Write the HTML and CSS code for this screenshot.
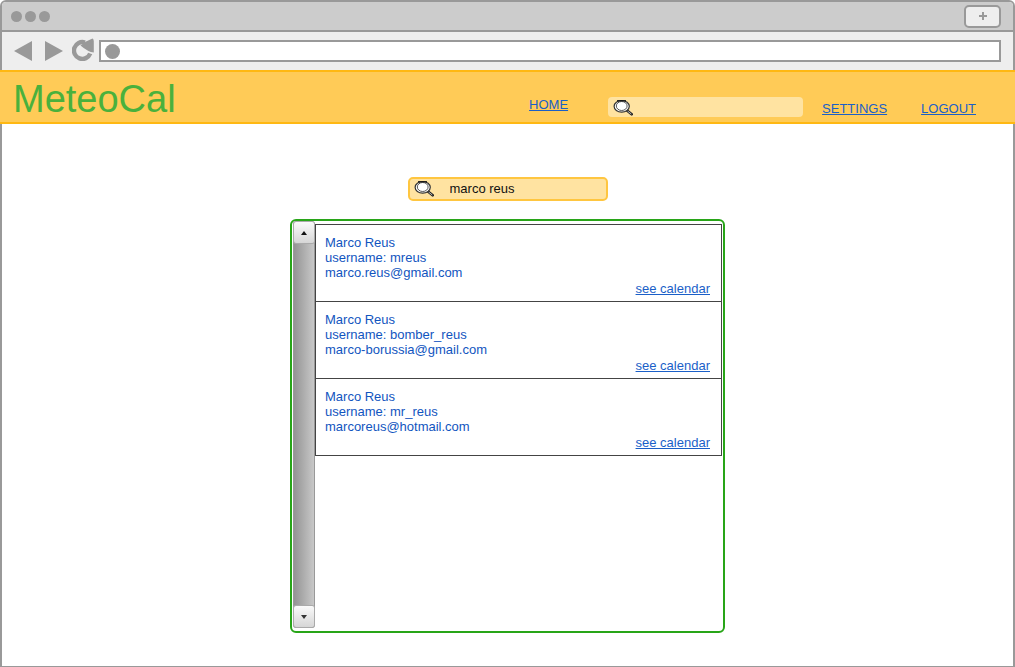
FILE: index.html
```
<!DOCTYPE html>
<html lang="en">
<head>
<meta charset="utf-8">
<title>MeteoCal</title>
<link rel="stylesheet" href="styles.css">
</head>
<body>
<svg class="defs" aria-hidden="true">
  <symbol id="lens" viewBox="0 0 20 17">
    <path d="M14 11.500 L18.700 15.300" stroke="#222" stroke-width="2.600" stroke-linecap="round"/>
    <path d="M14.500 12 L18.300 15" stroke="#ccc" stroke-width="0.900"/>
    <ellipse cx="8.700" cy="7.300" rx="7.600" ry="5.800" fill="#fff" stroke="#333" stroke-width="1.200"/>
    <ellipse cx="8.700" cy="7" rx="5.400" ry="4.500" fill="#fff" stroke="#444" stroke-width="0.900"/>
    <path d="M4 1.800 H13" stroke="#111" stroke-width="1.300"/>
  </symbol>
</svg>
<div class="window">
  <div class="titlebar">
    <div class="dots"><span class="dot"></span><span class="dot"></span><span class="dot"></span></div>
    <button class="new-tab" type="button" aria-label="New tab">
      <svg width="8" height="8" viewBox="0 0 8 8"><path d="M4 0V8M0 4H8" stroke="#999" stroke-width="2"/></svg>
    </button>
  </div>
  <div class="toolbar">
    <button class="tool" type="button" aria-label="Back"><svg width="18" height="20" viewBox="0 0 18 20"><path d="M0 10 L18 0 V20Z" fill="#999"/></svg></button>
    <button class="tool" type="button" aria-label="Forward"><svg width="18" height="20" viewBox="0 0 18 20"><path d="M18 10 L0 0 V20Z" fill="#999"/></svg></button>
    <button class="tool reload" type="button" aria-label="Reload"><svg width="23" height="24" viewBox="0 0 23 24"><path d="M13 4.500 A8.400 8.400 0 1 0 18.200 15.500" fill="none" stroke="#999" stroke-width="4.400"/><path d="M8.500 7.500 L14 3.500 L20.500 0.500 Q22 1 21.800 5 V14.500 Q16 14 8.500 7.500Z" fill="#999"/></svg></button>
    <label class="address"><span class="site"></span><input type="text" aria-label="Address"></label>
  </div>
  <header class="header">
    <h1 class="logo">MeteoCal</h1>
    <nav class="nav">
      <a class="home" href="#">HOME</a>
      <label class="search"><svg class="lens" width="20" height="17"><use href="#lens"/></svg><input type="search" aria-label="Search"></label>
      <a class="settings" href="#">SETTINGS</a>
      <a class="logout" href="#">LOGOUT</a>
    </nav>
  </header>
  <main class="main">
    <label class="search outlined"><svg class="lens" width="20" height="17"><use href="#lens"/></svg><input type="search" aria-label="Search users" value="marco reus"></label>
    <section class="panel">
      <div class="scrollbar">
        <button class="step" type="button" aria-label="Scroll up"><svg width="6" height="4" viewBox="0 0 6 4"><path d="M3 0L6 4H0Z" fill="#111"/></svg></button>
        <button class="step" type="button" aria-label="Scroll down"><svg width="6" height="4" viewBox="0 0 6 4"><path d="M3 4L6 0H0Z" fill="#333"/></svg></button>
      </div>
      <ul class="results">
        <li class="result"><p>Marco Reus<br>username: mreus<br>marco.reus@gmail.com</p><a href="#">see calendar</a></li>
        <li class="result"><p>Marco Reus<br>username: bomber_reus<br>marco-borussia@gmail.com</p><a href="#">see calendar</a></li>
        <li class="result"><p>Marco Reus<br>username: mr_reus<br>marcoreus@hotmail.com</p><a href="#">see calendar</a></li>
      </ul>
    </section>
  </main>
</div>
</body>
</html>
```
FILE: styles.css
```
* { box-sizing: border-box; }
body {
  margin: 0;
  background: #fff;
  font: 13px/15px "Liberation Sans", Arial, sans-serif;
  color: #1155c0;
}
a { color: #1a5fc8; text-underline-offset: 1px; }
button { padding: 0; border: 0; background: none; }
input { border: 0; padding: 0; background: none; font: inherit; color: #111; outline: none; min-width: 0; flex: 1; appearance: none; }
.defs { position: absolute; width: 0; height: 0; }
.window {
  display: flex;
  flex-direction: column;
  min-height: 100vh;
  border: 2px solid #999;
  border-bottom-width: 1px;
  border-radius: 6px 6px 0 0;
}
.titlebar {
  display: flex;
  align-items: center;
  justify-content: space-between;
  height: 30px;
  padding: 0 12px 0 9px;
  border-bottom: 2px solid #999;
  border-radius: 4px 4px 0 0;
  background: #ccc;
}
.dots { display: flex; gap: 3px; }
.dot { width: 11px; height: 11px; border-radius: 50%; background: #999; }
.new-tab {
  display: flex;
  align-items: center;
  justify-content: center;
  width: 37px;
  height: 23px;
  border: 2px solid #999;
  border-radius: 5px;
  background: #eee;
}
.toolbar {
  display: flex;
  align-items: center;
  height: 38px;
  padding: 0 12px;
  background: #eee;
}
.tool { display: flex; margin-right: 13px; }
.tool.reload { margin: 0 4px 2px -4px; }
.address {
  display: flex;
  flex: 1;
  align-items: center;
  gap: 6px;
  height: 22px;
  padding-left: 4px;
  border: 2px solid #999;
  background: #fff;
}
.site { width: 15px; height: 15px; border-radius: 50%; background: #999; }
.header {
  display: flex;
  justify-content: space-between;
  height: 54px;
  margin: 0 -2px;
  padding: 0 39px 0 13px;
  border: 2px solid #ffb812;
  border-width: 2px 0;
  background: #ffcb57;
}
.logo { margin: 4px 0 0; font-size: 38px; line-height: 46px; font-weight: 400; color: #4ab13c; }
.nav { display: flex; align-items: flex-start; padding-top: 25px; }
.home { margin-right: 40px; }
.settings { margin: 4px 34px 0 19px; }
.logout { margin-top: 4px; }
.search {
  display: flex;
  align-items: center;
  width: 195px;
  height: 20px;
  padding-left: 5px;
  border-radius: 4px;
  background: #ffe3a1;
}
.search .lens { flex: none; margin-right: 16px; }
.search.outlined { width: 200px; height: 24px; padding: 0 0 2px 4px; border: 2px solid #ffc640; border-radius: 5px; }
.main {
  display: flex;
  flex-direction: column;
  align-items: center;
  gap: 18px;
  padding: 53px 16px 32px;
}
.panel {
  display: flex;
  width: 100%;
  max-width: 435px;
  min-height: 414px;
  padding: 0 1px 3px;
  border: 2px solid #28a518;
  border-radius: 6px;
}
.scrollbar {
  display: flex;
  flex-direction: column;
  justify-content: space-between;
  width: 22px;
  background: linear-gradient(90deg, #949494, #c8c8c8);
  border: 1px solid #999;
  border-radius: 3px;
}
.step {
  display: flex;
  align-items: center;
  justify-content: center;
  height: 21px;
  border-radius: 2px;
  background: linear-gradient(#fafafa, #d6d6d6);
  box-shadow: 0 0 0 1px #aaa;
}
.results { flex: 1; align-self: flex-start; margin: 3px 0 0; padding: 0; list-style: none; border: 1px solid #444; }
.result { display: flex; flex-direction: column; padding: 10px 11px 4px 9px; }
.result + .result { border-top: 1px solid #444; }
.result p { margin: 0 0 1px; }
.result a { align-self: flex-end; margin-bottom: 1px; }
```
